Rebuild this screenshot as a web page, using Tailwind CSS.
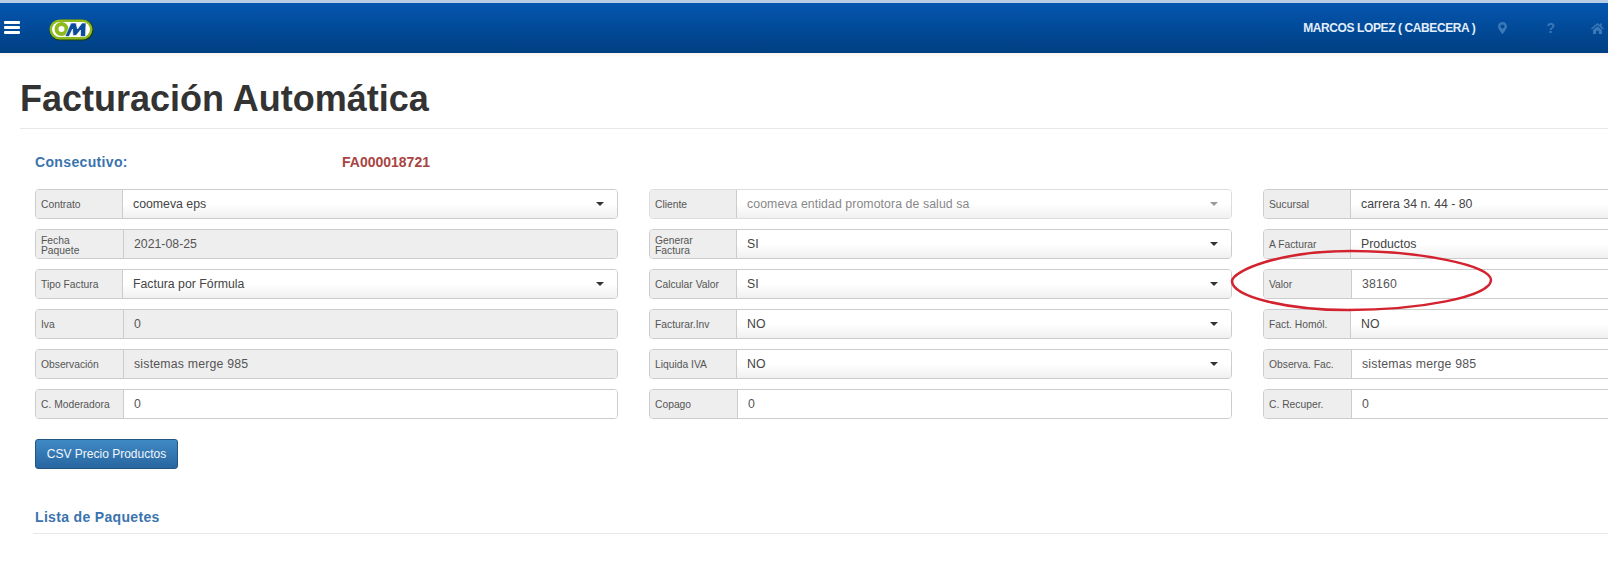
<!DOCTYPE html>
<html lang="es">
<head>
<meta charset="utf-8">
<script src="https://cdn.jsdelivr.net/npm/@tailwindcss/browser@4"></script>
<title>Facturación Automática</title>
</head>
<body class="bg-white font-['Liberation_Sans',Arial,sans-serif] text-[#333] overflow-hidden">
<div class="relative w-[1608px] h-[566px] overflow-hidden">
  <div class="h-[3px] bg-[#b9cde4]"></div>
  <header class="h-[50px] bg-gradient-to-b from-[#0556b0] to-[#003f82] flex items-center">
    <div class="ml-[4px] w-[16px] flex flex-col gap-[2px] -mt-[1px]">
      <span class="h-[3px] bg-white rounded-[1px]"></span>
      <span class="h-[3px] bg-white rounded-[1px]"></span>
      <span class="h-[3px] bg-white rounded-[1px]"></span>
    </div>
    <svg class="ml-[29px] mt-[3px]" width="45" height="22" viewBox="0 0 45 22">
      <rect x="0.5" y="0.5" width="44" height="21" rx="10.5" fill="#1c3a12"/>
      <rect x="0.5" y="0.5" width="43" height="20" rx="10" fill="#8dbb1e"/>
      <rect x="3" y="3" width="38" height="15" rx="7.5" fill="#fff"/>
      <circle cx="12.500" cy="10" r="5" fill="none" stroke="#8dbb1e" stroke-width="4"/>
      <path d="M16 17.500 L22 4 L27 4 L28.500 10 L33 4 L37 4 L36.500 17.500 L31.500 17.500 L31.500 11 L27 16.500 L24 16.500 L23.500 10 L20 17.500 Z" fill="#0b4c9c" stroke="#fff" stroke-width="0.6"/>
    </svg>
    <div class="ml-auto flex items-center">
      <span class="text-[12px] font-bold tracking-[-0.4px] text-[#e3eefb]">MARCOS LOPEZ ( CABECERA )</span>
      <svg class="ml-[23px]" width="9" height="12" viewBox="0 0 9 12"><path fill="#3a78b8" fill-rule="evenodd" d="M4.500 0C2 0 0 2 0 4.400 0 7 4.500 12 4.500 12S9 7 9 4.400C9 2 7 0 4.500 0ZM4.500 2.400A2 2 0 1 1 4.500 6.400 2 2 0 0 1 4.500 2.400Z"/></svg>
      <span class="ml-[39px] text-[14px] leading-none font-bold text-[#3a78b8]">?</span>
      <svg class="ml-[36px] mr-[4px]" width="13" height="11" viewBox="0 0 13 11"><path fill="#3a78b8" d="M6.500 0 0 5.600 1 6.600 6.500 2 12 6.600 13 5.600 10.600 3.500V.6H9V2.100ZM2 7 6.500 3.200 11 7V11H7.800V7.800H5.200V11H2Z"/></svg>
    </div>
  </header>
  <div class="h-[5px] bg-gradient-to-b from-[#fdf4f1] to-white"></div>

  <main class="pl-[20px]">
    <h1 class="pt-[19px] text-[36px] leading-[44px] font-bold text-[#333]">Facturación Automática</h1>
    <div class="mt-[7px] border-t border-[#e8e8e8]"></div>

    <section class="pl-[15px] pt-[24px]">
      <div class="flex items-center h-[18px] text-[14px] font-bold">
        <span class="w-[307px] text-[#3a73ad] tracking-[0.35px]">Consecutivo:</span>
        <span class="text-[#a94442]">FA000018721</span>
      </div>

      <div class="mt-[18px] grid grid-cols-[583px_583px_583px] gap-x-[31px] gap-y-[10px] w-max text-[12.3px]">
        <!-- Row 1 -->
        <div class="flex h-[30px] border border-[#ccc] rounded-[4px] overflow-hidden"><span class="w-[87px] shrink-0 flex items-center pl-[5px] pt-[2px] leading-[10px] text-[10.3px] text-[#555] bg-[#eee] border-r border-[#ccc]">Contrato</span><span class="flex-1 flex items-center justify-between pl-[10px] pr-[13px] bg-gradient-to-b from-white from-50% to-[#f0f0f0] text-[#444]">coomeva eps<i class="border-x-[4px] border-x-transparent border-t-[4px] border-t-[#333]"></i></span></div>
        <div class="flex h-[30px] border border-[#ddd] rounded-[4px] overflow-hidden"><span class="w-[87px] shrink-0 flex items-center pl-[5px] pt-[2px] leading-[10px] text-[10.3px] text-[#555] bg-[#eee] border-r border-[#ccc]">Cliente</span><span class="flex-1 flex items-center justify-between pl-[10px] pr-[13px] bg-gradient-to-b from-white from-50% to-[#f0f0f0] text-[#888] tracking-[0.08px]">coomeva entidad promotora de salud sa<i class="border-x-[4px] border-x-transparent border-t-[4px] border-t-[#999]"></i></span></div>
        <div class="flex h-[30px] border border-[#ccc] rounded-[4px] overflow-hidden"><span class="w-[87px] shrink-0 flex items-center pl-[5px] pt-[2px] leading-[10px] text-[10.3px] text-[#555] bg-[#eee] border-r border-[#ccc]">Sucursal</span><span class="flex-1 flex items-center pl-[10px] bg-gradient-to-b from-white from-50% to-[#f0f0f0] text-[#444]">carrera 34 n. 44 - 80</span></div>
        <!-- Row 2 -->
        <div class="flex h-[30px] border border-[#ccc] rounded-[4px] overflow-hidden"><span class="w-[88px] shrink-0 flex items-center pl-[5px] pt-[4px] leading-[10px] text-[10.3px] text-[#555] bg-[#eee] border-r border-[#ccc]">Fecha<br>Paquete</span><span class="flex-1 flex items-center pl-[10px] bg-[#eee] text-[#555]">2021-08-25</span></div>
        <div class="flex h-[30px] border border-[#ccc] rounded-[4px] overflow-hidden"><span class="w-[87px] shrink-0 flex items-center pl-[5px] pt-[4px] leading-[10px] text-[10.3px] text-[#555] bg-[#eee] border-r border-[#ccc]">Generar<br>Factura</span><span class="flex-1 flex items-center justify-between pl-[10px] pr-[13px] bg-gradient-to-b from-white from-50% to-[#f0f0f0] text-[#444]">SI<i class="border-x-[4px] border-x-transparent border-t-[4px] border-t-[#333]"></i></span></div>
        <div class="flex h-[30px] border border-[#ccc] rounded-[4px] overflow-hidden"><span class="w-[87px] shrink-0 flex items-center pl-[5px] pt-[2px] leading-[10px] text-[10.3px] text-[#555] bg-[#eee] border-r border-[#ccc]">A Facturar</span><span class="flex-1 flex items-center pl-[10px] bg-gradient-to-b from-white from-50% to-[#f0f0f0] text-[#444]">Productos</span></div>
        <!-- Row 3 -->
        <div class="flex h-[30px] border border-[#ccc] rounded-[4px] overflow-hidden"><span class="w-[87px] shrink-0 flex items-center pl-[5px] pt-[2px] leading-[10px] text-[10.3px] text-[#555] bg-[#eee] border-r border-[#ccc]">Tipo Factura</span><span class="flex-1 flex items-center justify-between pl-[10px] pr-[13px] bg-gradient-to-b from-white from-50% to-[#f0f0f0] text-[#444]">Factura por Fórmula<i class="border-x-[4px] border-x-transparent border-t-[4px] border-t-[#333]"></i></span></div>
        <div class="flex h-[30px] border border-[#ccc] rounded-[4px] overflow-hidden"><span class="w-[87px] shrink-0 flex items-center pl-[5px] pt-[2px] leading-[10px] text-[10.3px] text-[#555] bg-[#eee] border-r border-[#ccc]">Calcular Valor</span><span class="flex-1 flex items-center justify-between pl-[10px] pr-[13px] bg-gradient-to-b from-white from-50% to-[#f0f0f0] text-[#444]">SI<i class="border-x-[4px] border-x-transparent border-t-[4px] border-t-[#333]"></i></span></div>
        <div class="flex h-[30px] border border-[#ccc] rounded-[4px] overflow-hidden"><span class="w-[88px] shrink-0 flex items-center pl-[5px] pt-[2px] leading-[10px] text-[10.3px] text-[#555] bg-[#eee] border-r border-[#ccc]">Valor</span><span class="flex-1 flex items-center pl-[10px] bg-white text-[#555] tracking-[0.15px]">38160</span></div>
        <!-- Row 4 -->
        <div class="flex h-[30px] border border-[#ccc] rounded-[4px] overflow-hidden"><span class="w-[88px] shrink-0 flex items-center pl-[5px] pt-[2px] leading-[10px] text-[10.3px] text-[#555] bg-[#eee] border-r border-[#ccc]">Iva</span><span class="flex-1 flex items-center pl-[10px] bg-[#eee] text-[#555]">0</span></div>
        <div class="flex h-[30px] border border-[#ccc] rounded-[4px] overflow-hidden"><span class="w-[87px] shrink-0 flex items-center pl-[5px] pt-[2px] leading-[10px] text-[10.3px] text-[#555] bg-[#eee] border-r border-[#ccc]">Facturar.Inv</span><span class="flex-1 flex items-center justify-between pl-[10px] pr-[13px] bg-gradient-to-b from-white from-50% to-[#f0f0f0] text-[#444]">NO<i class="border-x-[4px] border-x-transparent border-t-[4px] border-t-[#333]"></i></span></div>
        <div class="flex h-[30px] border border-[#ccc] rounded-[4px] overflow-hidden"><span class="w-[87px] shrink-0 flex items-center pl-[5px] pt-[2px] leading-[10px] text-[10.3px] text-[#555] bg-[#eee] border-r border-[#ccc]">Fact. Homól.</span><span class="flex-1 flex items-center pl-[10px] bg-gradient-to-b from-white from-50% to-[#f0f0f0] text-[#444]">NO</span></div>
        <!-- Row 5 -->
        <div class="flex h-[30px] border border-[#ccc] rounded-[4px] overflow-hidden"><span class="w-[88px] shrink-0 flex items-center pl-[5px] pt-[2px] leading-[10px] text-[10.3px] text-[#555] bg-[#eee] border-r border-[#ccc]">Observación</span><span class="flex-1 flex items-center pl-[10px] bg-[#eee] text-[#555] tracking-[0.2px]">sistemas merge 985</span></div>
        <div class="flex h-[30px] border border-[#ccc] rounded-[4px] overflow-hidden"><span class="w-[87px] shrink-0 flex items-center pl-[5px] pt-[2px] leading-[10px] text-[10.3px] text-[#555] bg-[#eee] border-r border-[#ccc]">Liquida IVA</span><span class="flex-1 flex items-center justify-between pl-[10px] pr-[13px] bg-gradient-to-b from-white from-50% to-[#f0f0f0] text-[#444]">NO<i class="border-x-[4px] border-x-transparent border-t-[4px] border-t-[#333]"></i></span></div>
        <div class="flex h-[30px] border border-[#ccc] rounded-[4px] overflow-hidden"><span class="w-[88px] shrink-0 flex items-center pl-[5px] pt-[2px] leading-[10px] text-[10.3px] text-[#555] bg-[#eee] border-r border-[#ccc]">Observa. Fac.</span><span class="flex-1 flex items-center pl-[10px] bg-white text-[#555] tracking-[0.2px]">sistemas merge 985</span></div>
        <!-- Row 6 -->
        <div class="flex h-[30px] border border-[#ccc] rounded-[4px] overflow-hidden"><span class="w-[88px] shrink-0 flex items-center pl-[5px] pt-[2px] leading-[10px] text-[10.3px] text-[#555] bg-[#eee] border-r border-[#ccc]">C. Moderadora</span><span class="flex-1 flex items-center pl-[10px] bg-white text-[#555]">0</span></div>
        <div class="flex h-[30px] border border-[#ccc] rounded-[4px] overflow-hidden"><span class="w-[88px] shrink-0 flex items-center pl-[5px] pt-[2px] leading-[10px] text-[10.3px] text-[#555] bg-[#eee] border-r border-[#ccc]">Copago</span><span class="flex-1 flex items-center pl-[10px] bg-white text-[#555]">0</span></div>
        <div class="flex h-[30px] border border-[#ccc] rounded-[4px] overflow-hidden"><span class="w-[88px] shrink-0 flex items-center pl-[5px] pt-[2px] leading-[10px] text-[10.3px] text-[#555] bg-[#eee] border-r border-[#ccc]">C. Recuper.</span><span class="flex-1 flex items-center pl-[10px] bg-white text-[#555]">0</span></div>
      </div>

      <button class="mt-[20px] block w-[143px] h-[30px] rounded-[3px] border border-[#245580] bg-gradient-to-b from-[#3f8ac6] to-[#2866a0] text-[#f2f6fb] text-[12px]">CSV Precio Productos</button>

      <h2 class="mt-[39px] text-[14px] leading-[18px] font-bold tracking-[0.33px] text-[#3a73ad]">Lista de Paquetes</h2>
      <div class="mt-[7px] -ml-[2px] border-t border-[#e8e8e8]"></div>
    </section>
  </main>

  <svg class="absolute left-[1228px] top-[247px] pointer-events-none" width="268" height="68" viewBox="0 0 268 68">
    <path d="M4 34C5 24 50 4 123 4 C190 4 263 18 263 33 C263 50 190 63 120 63 C60 63 4 50 4 34Z" fill="none" stroke="#d2232f" stroke-width="2.500"/>
  </svg>
</div>
</body>
</html>
